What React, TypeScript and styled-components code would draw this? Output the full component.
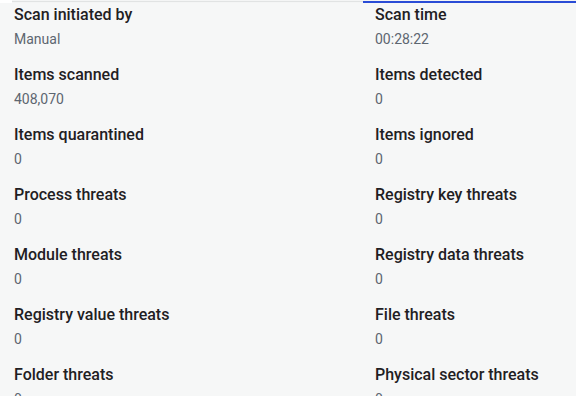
import React from 'react'
import styled, { createGlobalStyle } from 'styled-components'

const GlobalStyle = createGlobalStyle`
  html, body {
    margin: 0;
    padding: 0;
    background: #ffffff;
  }
  body {
    font-family: Roboto, "Noto Sans", Arial, sans-serif;
    -webkit-font-smoothing: antialiased;
  }
`

const Page = styled.div`
  width: 576px;
  height: 404px;
  overflow: hidden;
  background: #ffffff;
`

// tab underline strip above the details panel
const TabStrip = styled.div`
  display: grid;
  grid-template-columns: 351px 1fr;
  margin-left: 12px;
  height: 3px;
  background: #f4f5f5;
`

const TabLine = styled.div<{ active?: boolean }>`
  margin-top: 1px;
  height: ${({ active }) => (active ? '2px' : '1px')};
  background: ${({ active }) => (active ? '#2a4cd6' : '#e1e3e3')};
`

const Panel = styled.div`
  height: 393px;
  overflow: hidden;
  background: #f6f7f7;
  box-sizing: border-box;
  padding: 2px 0 0 14px;
`

const Grid = styled.div`
  display: grid;
  grid-template-columns: 361px 1fr;
  row-gap: 16px;
`

const Item = styled.div`
  display: flex;
  flex-direction: column;
  gap: 4px;
`

const Label = styled.div`
  font-size: 16px;
  font-weight: 500;
  line-height: 20px;
  color: #1f2023;
  white-space: nowrap;
`

const Value = styled.div`
  font-size: 14px;
  font-weight: 400;
  line-height: 20px;
  color: #5d6670;
`

const details: [string, string][] = [
  ['Scan initiated by', 'Manual'],
  ['Scan time', '00:28:22'],
  ['Items scanned', '408,070'],
  ['Items detected', '0'],
  ['Items quarantined', '0'],
  ['Items ignored', '0'],
  ['Process threats', '0'],
  ['Registry key threats', '0'],
  ['Module threats', '0'],
  ['Registry data threats', '0'],
  ['Registry value threats', '0'],
  ['File threats', '0'],
  ['Folder threats', '0'],
  ['Physical sector threats', '0'],
]

export default function App() {
  return (
    <Page>
      <GlobalStyle />
      <TabStrip>
        <TabLine />
        <TabLine active />
      </TabStrip>
      <Panel>
        <Grid>
          {details.map(([label, value]) => (
            <Item key={label}>
              <Label>{label}</Label>
              <Value>{value}</Value>
            </Item>
          ))}
        </Grid>
      </Panel>
    </Page>
  )
}
